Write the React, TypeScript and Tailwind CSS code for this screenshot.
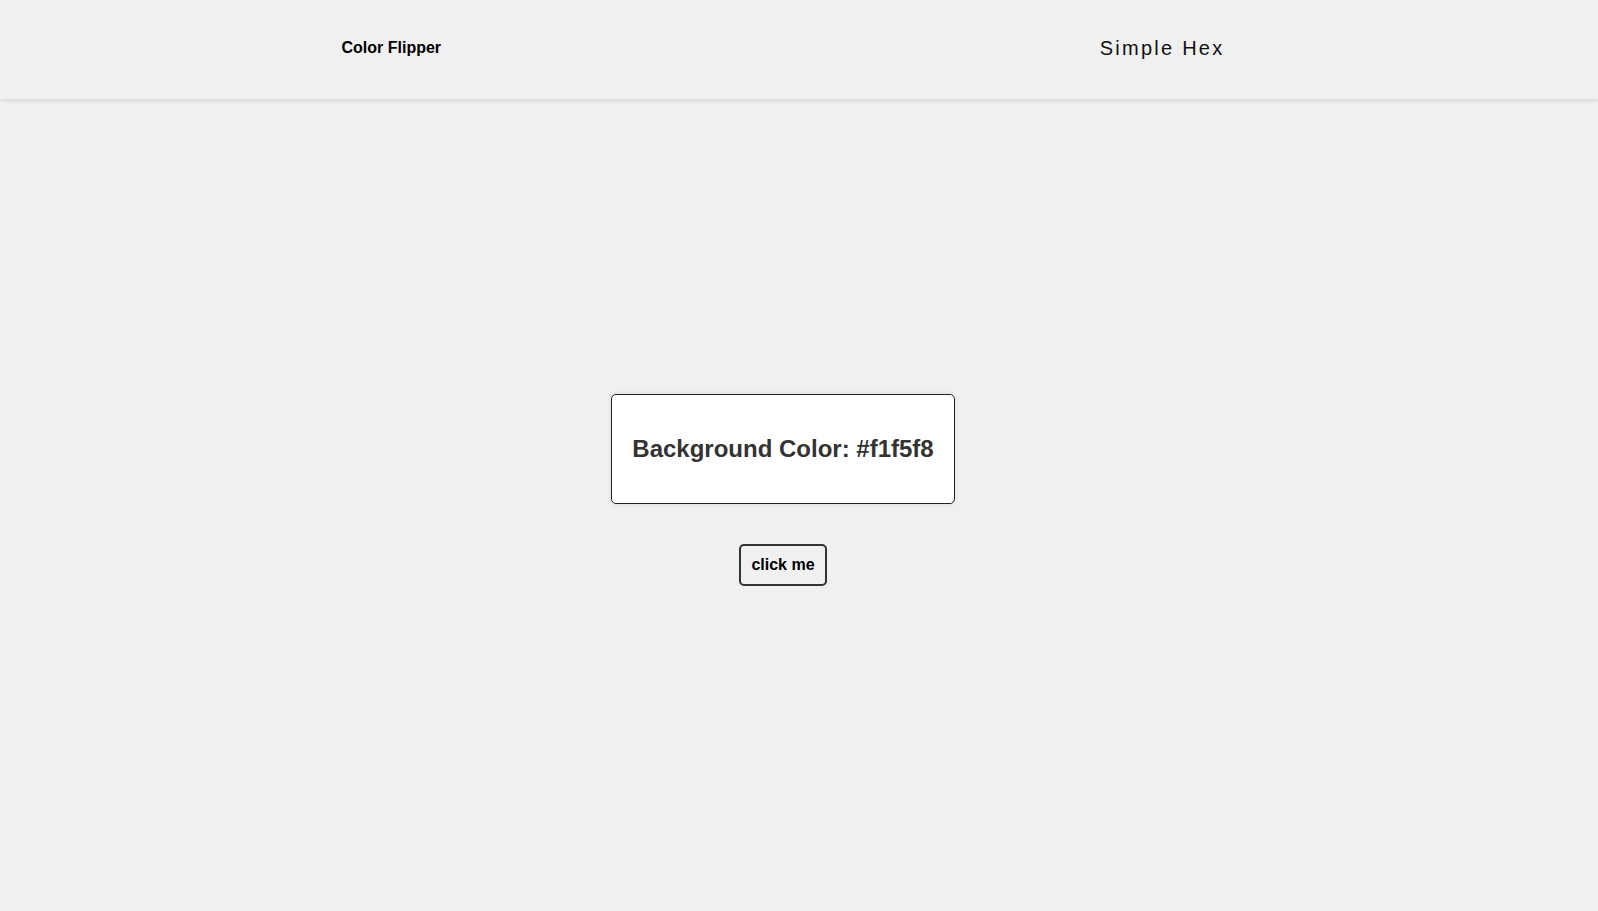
export default function App() {
  return (
    <div className="min-h-screen bg-[#f0f0f0] font-['Liberation_Sans',Arial,sans-serif] text-[#111]">
      {/* NAV */}
      <nav className="h-[99px] bg-[#f0f0f0] shadow-[0_2px_4px_rgba(0,0,0,0.1)]">
        <div className="w-[1566px]">
          <div className="mx-auto flex h-[96px] w-[883px] items-center justify-between">
            <h4 className="text-[16px] font-bold leading-[18px] text-black">Color Flipper</h4>
            <span className="text-[20px] leading-[23px] tracking-[2.25px] text-[#111]">Simple Hex</span>
          </div>
        </div>
      </nav>

      {/* MAIN */}
      <main className="flex w-[1566px] flex-col items-center pt-[295px]">
        <div className="rounded-[5px] border border-[#222] bg-white px-5 py-10 shadow-[0_0_6px_rgba(0,0,0,0.08)]">
          <h2 className="text-[24px] font-bold leading-[28px] text-[#333]">
            Background Color: #f1f5f8
          </h2>
        </div>
        <button className="mt-[40px] rounded-[5px] border-2 border-[#333] bg-transparent px-[10px] py-[9px] text-[16px] font-bold leading-[20px] text-black">
          click me
        </button>
      </main>
    </div>
  );
}
